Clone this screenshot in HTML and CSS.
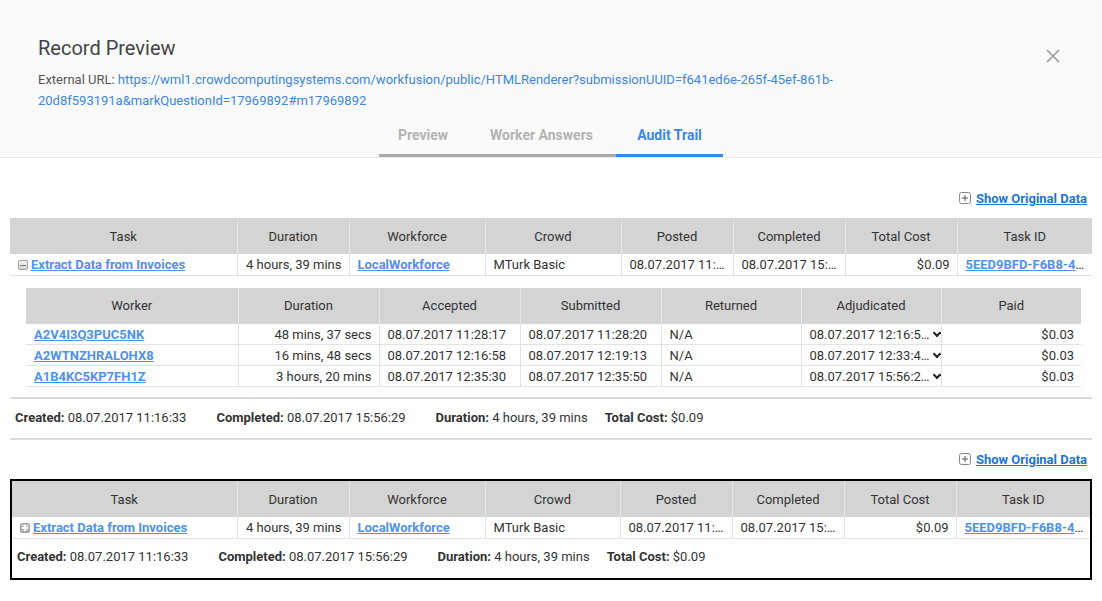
FILE: index.html
```html
<!DOCTYPE html>
<html lang="en">
<head>
    <meta charset="UTF-8">
    <title>Record Preview</title>
    <link rel="stylesheet" href="styles.css">
</head>
<body>

<div class="modal-header">
    <div class="header-top">
        <div class="header-info">
            <h1 class="title">Record Preview</h1>
            <p class="ext-url"><span class="label">External URL:</span> <a href="#">https://wml1.crowdcomputingsystems.com/workfusion/public/HTMLRenderer?submissionUUID=f641ed6e-265f-45ef-861b-20d8f593191a&amp;markQuestionId=17969892#m17969892</a></p>
        </div>
        <button class="close-btn" aria-label="Close">
            <svg width="14" height="14" viewBox="0 0 14 14"><path d="M1 1 L13 13 M13 1 L1 13" stroke="#999" stroke-width="1.6" fill="none"/></svg>
        </button>
    </div>
    <div class="tabs">
        <div class="tab tab-preview">Preview</div>
        <div class="tab tab-answers">Worker Answers</div>
        <div class="tab tab-audit active">Audit Trail</div>
    </div>
</div>

<div class="content">

    <!-- record 1 -->
    <div class="record">
        <div class="show-original">
            <span class="box-icon">
                <svg width="12" height="12" viewBox="0 0 12 12"><rect x="0.5" y="0.5" width="11" height="11" rx="2" fill="#fff" stroke="#888"/><path d="M3 6 H9 M6 3 V9" stroke="#555" stroke-width="1"/></svg>
            </span>
            <a href="#">Show Original Data</a>
        </div>

        <table class="grid task-grid">
            <colgroup>
                <col class="c-task"><col class="c-dur"><col class="c-wf"><col class="c-crowd">
                <col class="c-posted"><col class="c-comp"><col class="c-cost"><col class="c-id">
            </colgroup>
            <thead>
                <tr>
                    <th>Task</th><th>Duration</th><th>Workforce</th><th>Crowd</th>
                    <th>Posted</th><th>Completed</th><th>Total Cost</th><th>Task ID</th>
                </tr>
            </thead>
            <tbody>
                <tr>
                    <td class="task-cell"><span class="row-icon minus"></span><a href="#">Extract Data from Invoices</a></td>
                    <td class="right">4 hours, 39 mins</td>
                    <td><a href="#">LocalWorkforce</a></td>
                    <td>MTurk Basic</td>
                    <td>08.07.2017 11:16:33</td>
                    <td>08.07.2017 15:56:29</td>
                    <td class="right">$0.09</td>
                    <td><a href="#">5EED9BFD-F6B8-4A1C-9E2F-03D7</a></td>
                </tr>
            </tbody>
        </table>

        <div class="workers">
            <table class="grid worker-grid">
                <colgroup>
                    <col class="w-worker"><col class="w-dur"><col class="w-date"><col class="w-date">
                    <col class="w-ret"><col class="w-adj"><col class="w-paid">
                </colgroup>
                <thead>
                    <tr>
                        <th>Worker</th><th>Duration</th><th>Accepted</th><th>Submitted</th>
                        <th>Returned</th><th>Adjudicated</th><th>Paid</th>
                    </tr>
                </thead>
                <tbody>
                    <tr>
                        <td><a href="#">A2V4I3Q3PUC5NK</a></td>
                        <td class="right">48 mins, 37 secs</td>
                        <td>08.07.2017 11:28:17</td>
                        <td>08.07.2017 11:28:20</td>
                        <td>N/A</td>
                        <td class="adj" title="08.07.2017 12:16:58"><span class="adj-text">08.07.2017 12:16:5…</span><span class="chev"></span></td>
                        <td class="right">$0.03</td>
                    </tr>
                    <tr>
                        <td><a href="#">A2WTNZHRALOHX8</a></td>
                        <td class="right">16 mins, 48 secs</td>
                        <td>08.07.2017 12:16:58</td>
                        <td>08.07.2017 12:19:13</td>
                        <td>N/A</td>
                        <td class="adj" title="08.07.2017 12:33:45"><span class="adj-text">08.07.2017 12:33:4…</span><span class="chev"></span></td>
                        <td class="right">$0.03</td>
                    </tr>
                    <tr>
                        <td><a href="#">A1B4KC5KP7FH1Z</a></td>
                        <td class="right">3 hours, 20 mins</td>
                        <td>08.07.2017 12:35:30</td>
                        <td>08.07.2017 12:35:50</td>
                        <td>N/A</td>
                        <td class="adj" title="08.07.2017 15:56:29"><span class="adj-text">08.07.2017 15:56:2…</span><span class="chev"></span></td>
                        <td class="right">$0.03</td>
                    </tr>
                </tbody>
            </table>
        </div>

        <div class="summary with-line">
            <span><b>Created:</b> 08.07.2017 11:16:33</span>
            <span><b>Completed:</b> 08.07.2017 15:56:29</span>
            <span><b>Duration:</b> 4 hours, 39 mins</span>
            <span><b>Total Cost:</b> $0.09</span>
        </div>
    </div>

    <!-- record 2 -->
    <div class="record record-last">
        <div class="show-original">
            <span class="box-icon">
                <svg width="12" height="12" viewBox="0 0 12 12"><rect x="0.5" y="0.5" width="11" height="11" rx="2" fill="#fff" stroke="#888"/><path d="M3 6 H9 M6 3 V9" stroke="#555" stroke-width="1"/></svg>
            </span>
            <a href="#">Show Original Data</a>
        </div>

        <div class="selected-box">
            <table class="grid task-grid inner">
                <colgroup>
                    <col class="c-task"><col class="c-dur"><col class="c-wf"><col class="c-crowd">
                    <col class="c-posted"><col class="c-comp"><col class="c-cost"><col class="c-id">
                </colgroup>
                <thead>
                    <tr>
                        <th>Task</th><th>Duration</th><th>Workforce</th><th>Crowd</th>
                        <th>Posted</th><th>Completed</th><th>Total Cost</th><th>Task ID</th>
                    </tr>
                </thead>
                <tbody>
                    <tr>
                        <td class="task-cell"><span class="row-icon plus"></span><a href="#">Extract Data from Invoices</a></td>
                        <td class="right">4 hours, 39 mins</td>
                        <td><a href="#">LocalWorkforce</a></td>
                        <td>MTurk Basic</td>
                        <td>08.07.2017 11:16:33</td>
                        <td>08.07.2017 15:56:29</td>
                        <td class="right">$0.09</td>
                        <td><a href="#">5EED9BFD-F6B8-4A1C-9E2F-03D7</a></td>
                    </tr>
                </tbody>
            </table>
            <div class="summary">
                <span><b>Created:</b> 08.07.2017 11:16:33</span>
                <span><b>Completed:</b> 08.07.2017 15:56:29</span>
                <span><b>Duration:</b> 4 hours, 39 mins</span>
                <span><b>Total Cost:</b> $0.09</span>
            </div>
        </div>
    </div>

</div>

</body>
</html>
```

FILE: styles.css
```css
* {
    margin: 0;
    padding: 0;
    box-sizing: border-box;
}

body {
    font-family: Roboto, 'Liberation Sans', sans-serif;
    font-size: 13px;
    color: #333;
    background-color: #fff;
}

a {
    color: #3d87e0;
}

/* Header */
.modal-header {
    background-color: #fafafa;
    border-bottom: 1px solid #e9e9e9;
    padding-top: 36px;
}

.header-top {
    display: flex;
    padding: 0 42px 0 38px;
}

.header-info {
    flex: 1;
    padding-right: 60px;
}

.title {
    font-size: 20px;
    font-weight: normal;
    line-height: 24px;
    color: #444;
}

.ext-url {
    margin-top: 9px;
    line-height: 21px;
    color: #555;
}

.ext-url a {
    text-decoration: none;
    color: #3a86e3;
}

.close-btn {
    background: none;
    border: none;
    width: 14px;
    height: 14px;
    margin-top: 13px;
    cursor: pointer;
}

.tabs {
    display: flex;
    justify-content: center;
    margin-top: 5px;
}

.tab {
    text-align: center;
    font-size: 14px;
    font-weight: bold;
    color: #b3b3b3;
    line-height: 20px;
    padding: 9px 0 9px;
    border-bottom: 3px solid #aaaaaa;
}

.tab-preview {
    width: 88px;
}

.tab-answers {
    width: 149px;
}

.tab-audit {
    width: 107px;
}

.tab.active {
    color: #3b86e8;
    border-bottom-color: #3b86e8;
}

/* Content */
.content {
    padding: 30px 10px 0;
}

.show-original {
    display: flex;
    justify-content: flex-end;
    align-items: center;
    height: 20px;
    padding-right: 5px;
    font-weight: bold;
}

.show-original a {
    color: #1a75d8;
}

.box-icon {
    display: flex;
    margin-right: 5px;
}

.grid {
    width: 100%;
    border-collapse: collapse;
    table-layout: fixed;
}

.task-grid {
    margin-top: 10px;
}

.grid th {
    height: 36px;
    background-color: #d4d4d4;
    font-weight: normal;
    color: #333;
    border-left: 1px solid #e6e6e6;
    padding: 0 8px;
}

.grid th:first-child {
    border-left: none;
}

.grid td {
    height: 21px;
    padding: 1px 6px 0 8px;
    border-left: 1px solid #e3e3e3;
    border-bottom: 1px solid #e3e3e3;
    white-space: nowrap;
    overflow: hidden;
    text-overflow: ellipsis;
}

.grid td.right {
    text-align: right;
    padding: 1px 7px 0 5px;
}

.grid td:first-child {
    border-left: none;
}

.grid td a {
    font-weight: bold;
    color: #4f92e6;
}

.task-cell {
    padding-left: 8px;
}

.row-icon {
    display: inline-block;
    width: 10px;
    height: 10px;
    margin-right: 3px;
    vertical-align: -1px;
    border: 1px solid #a0a0a0;
    border-radius: 2px;
    position: relative;
}

.row-icon.minus {
    background: linear-gradient(#f4f4f4, #d6d6d6);
}

.row-icon.plus {
    background: linear-gradient(#cfcfcf, #a9a9a9);
}

.row-icon::before,
.row-icon.plus::after {
    content: '';
    position: absolute;
    background-color: #fff;
}

.row-icon::before {
    left: 1px;
    right: 1px;
    top: 3px;
    height: 2px;
}

.row-icon.plus::after {
    top: 1px;
    bottom: 1px;
    left: 3px;
    width: 2px;
}

.row-icon.minus::before {
    background-color: #777;
    height: 1px;
    top: 4px;
}

.task-grid col.c-task { width: 227px; }
.task-grid col.c-dur { width: 112px; }
.task-grid col.c-wf { width: 136px; }
.task-grid col.c-crowd { width: 136px; }
.task-grid col.c-posted { width: 112px; }
.task-grid col.c-comp { width: 112px; }
.task-grid col.c-cost { width: 112px; }
.task-grid col.c-id { width: 135px; }

.task-grid.inner {
    margin-top: 0;
}

.task-grid.inner col.c-task { width: 225px; }
.task-grid.inner col.c-crowd { width: 135px; }
.task-grid.inner col.c-id { width: 134px; }

/* Worker sub table */
.workers {
    padding: 12px 11px 0 16px;
}

.worker-grid col.w-worker { width: 212px; }
.worker-grid col.w-dur { width: 141px; }
.worker-grid col.w-date { width: 141px; }
.worker-grid col.w-ret { width: 140px; }
.worker-grid col.w-adj { width: 140px; }
.worker-grid col.w-paid { width: 140px; }

.grid td.adj {
    padding-right: 0;
    text-overflow: clip;
}

.adj-text {
    display: inline-block;
    vertical-align: top;
}

.chev {
    display: inline-block;
    width: 6px;
    height: 6px;
    margin-left: 4px;
    border-right: 2.5px solid #222;
    border-bottom: 2.5px solid #222;
    transform: rotate(45deg);
    vertical-align: 3px;
}

/* Summary */
.summary {
    display: flex;
    line-height: 20px;
    padding: 9px 5px 10px;
}

.summary span {
    margin-right: 30px;
}

.summary span:nth-child(3) {
    margin-right: 17px;
}

.summary b {
    color: #333;
}

.summary.with-line {
    margin-top: 10px;
    border-top: 2px solid #dcdcdc;
    border-bottom: 2px solid #dcdcdc;
}

.record-last .show-original {
    margin-top: 9px;
}

.selected-box {
    margin-top: 10px;
    border: 2px solid #000;
}

.selected-box .summary {
    padding: 8px 5px 11px;
}
```
